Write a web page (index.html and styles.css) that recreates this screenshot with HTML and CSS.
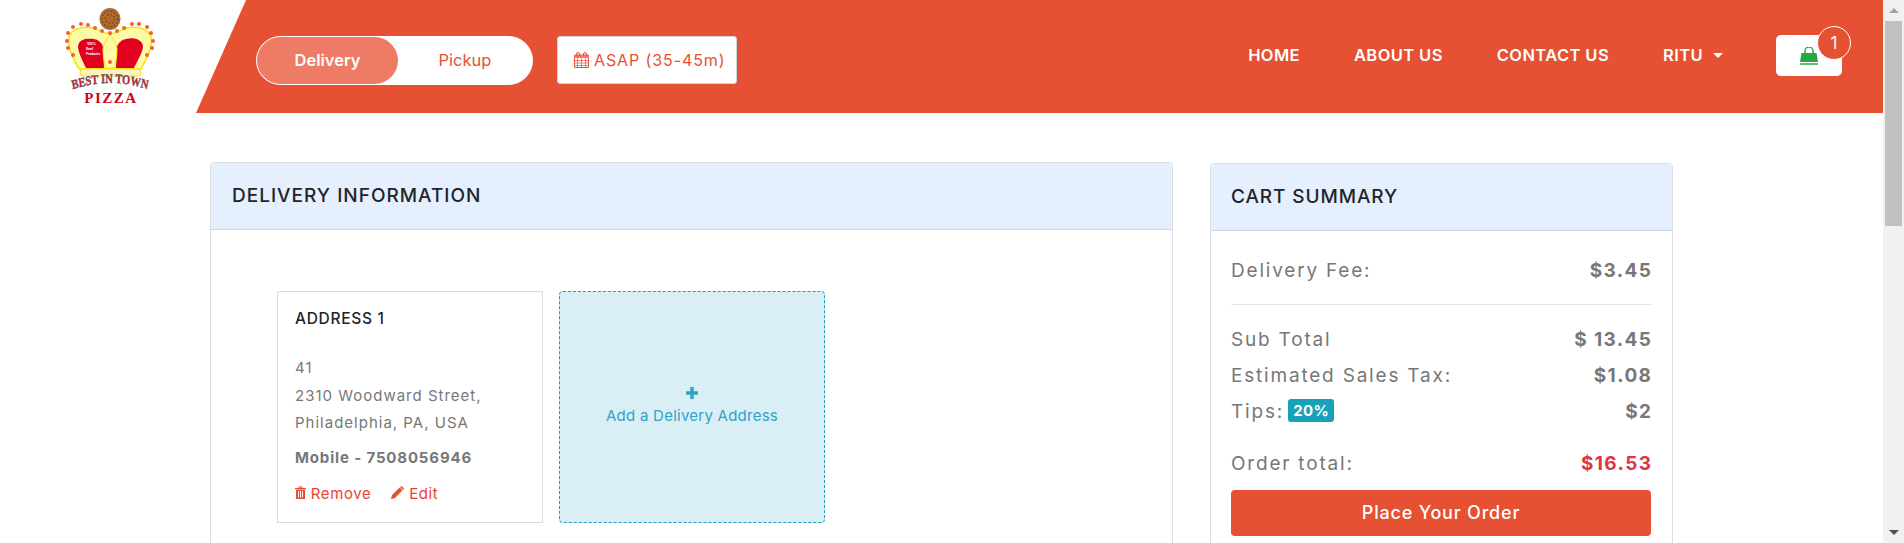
FILE: index.html
```html
<!DOCTYPE html>
<html lang="en">
<head>
    <meta charset="UTF-8">
    <meta name="viewport" content="width=device-width, initial-scale=1.0">
    <title>Best In Town Pizza - Checkout</title>
    <link rel="stylesheet" href="styles.css">
</head>
<body>
    <div class="page">
        <header class="header">
            <a class="logo" href="#">
                <svg class="logo-svg" viewBox="0 0 130 115" width="130" height="115">
                    <ellipse cx="60" cy="19" rx="10.500" ry="11" fill="#b0692f"/>
                    <circle cx="60" cy="19" r="8" fill="none" stroke="#7a4319" stroke-width="1.500" stroke-dasharray="1.500 2"/>
                    <circle cx="60" cy="19" r="4.500" fill="none" stroke="#7a4319" stroke-width="1.500" stroke-dasharray="1.500 2"/>
                    <path d="M29 69 C23 58 17 47 19 37 C21 29 33 26 43 28 C50 30 55 34 60 34 C65 34 70 30 77 28 C87 26 99 29 101 37 C103 47 97 58 91 69 Z" fill="#fffaa8" stroke="#f5e50a" stroke-width="1.500"/>
                    <path d="M36 68 C31 58 28 51 28 46 C29 39 37 38 44 39 C49 40 52 43 53 47 L54 68 Z" fill="#e2001f"/>
                    <path d="M84 68 C89 58 93 51 93 46 C92 39 83 37 76 39 C71 40 68 43 67 47 L66 68 Z" fill="#e2001f"/>
                    <path d="M60 35 C63 38 67 44 67 50 C67 58 65 63 65 68 L55 68 C55 63 53 58 53 50 C53 44 57 38 60 35 Z" fill="#fffaa8" stroke="#f5e50a"/>
                    <rect x="30" y="69" width="61" height="7" rx="3.500" fill="#fdf3c0" stroke="#f5e50a"/>
                    <g fill="#f0603a">
                        <circle cx="23" cy="27" r="2"/><circle cx="31" cy="24" r="2"/><circle cx="38" cy="25" r="2"/><circle cx="45" cy="28" r="2"/><circle cx="52" cy="31" r="2"/>
                        <circle cx="60" cy="33" r="2"/><circle cx="67" cy="31" r="2"/><circle cx="74" cy="28" r="2"/><circle cx="82" cy="24" r="2"/><circle cx="89" cy="24" r="2"/><circle cx="97" cy="27" r="2"/>
                        <circle cx="101" cy="33" r="2"/><circle cx="103" cy="41" r="2"/><circle cx="102" cy="48" r="2"/><circle cx="97" cy="55" r="2"/>
                        <circle cx="18" cy="33" r="2"/><circle cx="17" cy="41" r="2"/><circle cx="18" cy="48" r="2"/><circle cx="23" cy="55" r="2"/>
                        <circle cx="60" cy="62" r="2"/>
                    </g>
                    <text class="logo-small" x="37" y="45">100%</text>
                    <text class="logo-small" x="36" y="50">Beef</text>
                    <text class="logo-small" x="36" y="55">Products</text>
                    <g transform="translate(60 0) scale(.8 1) translate(-60 0)">
                        <path id="logo-arc" d="M4 92 Q60 74 116 92" fill="none"/>
                        <text class="logo-best"><textPath href="#logo-arc" startOffset="50%" text-anchor="middle">BEST IN TOWN</textPath></text>
                    </g>
                    <text class="logo-pizza" x="61" y="103" text-anchor="middle">PIZZA</text>
                </svg>
            </a>
            <div class="header-band">
                <div class="mode-toggle">
                    <span class="mode mode-active">Delivery</span>
                    <span class="mode">Pickup</span>
                </div>
                <button class="asap-button">
                    <svg class="icon-calendar" viewBox="0 0 15 16" width="15" height="16">
                        <path d="M.5 3h14v12.500H.5z" fill="none" stroke="#e65133"/>
                        <path d="M0 3h15v3H0z" fill="#ee7b65"/>
                        <path d="M2.500 4V2a1.500 1.500 0 0 1 3 0v2M9.500 4V2a1.500 1.500 0 0 1 3 0v2" fill="none" stroke="#e65133"/>
                        <path d="M0 8.500h15M0 11h15M0 13.500h15M3.500 6v9M7.500 6v9M11.500 6v9" stroke="#e65133" stroke-width=".7"/>
                    </svg>
                    ASAP (35-45m)
                </button>
                <nav class="nav">
                    <a href="#">HOME</a>
                    <a href="#">ABOUT US</a>
                    <a href="#">CONTACT US</a>
                    <a href="#">RITU<span class="caret"></span></a>
                </nav>
                <div class="cart-button">
                    <svg class="icon-bag" viewBox="0 0 18 18" width="18" height="18">
                        <path d="M5 7V4a4 4 0 0 1 8 0v3" fill="none" stroke="#28a745" stroke-width="1.400"/>
                        <path d="M1.500 6h15L18 15H0z" fill="#28a745"/>
                        <path d="M0 17h18" stroke="#28a745" stroke-width="1.500"/>
                    </svg>
                    <span class="cart-count">1</span>
                </div>
            </div>
        </header>

        <main class="content">
            <section class="card delivery-card">
                <h2 class="card-header">DELIVERY INFORMATION</h2>
                <div class="address-list">
                    <div class="address">
                        <h3 class="address-title">ADDRESS 1</h3>
                        <p class="address-lines">41<br>2310 Woodward Street,<br>Philadelphia, PA, USA</p>
                        <p class="address-mobile">Mobile - 7508056946</p>
                        <div class="address-actions">
                            <a href="#">
                                <svg viewBox="0 0 11 13" width="11" height="13"><path d="M0 2h11v1.300H0zM3.500 2V.6h4V2H6.500V1.500h-2V2zM1 3.800h9V13H1zM3 5v6.500h.9V5zM5 5v6.500h1V5zM7.100 5v6.500H8V5z" fill="#e65133" fill-rule="evenodd"/></svg>
                                Remove
                            </a>
                            <a href="#">
                                <svg viewBox="0 0 12 12" width="13" height="13"><path d="M0 12l.8-3.500L8 1.300l2.700 2.700-7.200 7.200zM8.800.5q.8-.7 1.500 0l1.200 1.200q.7.7 0 1.500l-.4.400L8.400.9z" fill="#e65133"/></svg>
                                Edit
                            </a>
                        </div>
                    </div>
                    <a class="address-add" href="#">
                        <svg viewBox="0 0 12 12" width="12" height="12"><path d="M4.300 0h3.400v4.300H12v3.400H7.700V12H4.300V7.700H0V4.300h4.300z" fill="#32a2c7"/></svg>
                        <span>Add a Delivery Address</span>
                    </a>
                </div>
            </section>

            <aside class="card cart-card">
                <h2 class="card-header">CART SUMMARY</h2>
                <div class="cart-body">
                    <div class="cart-row cart-row-fee"><span>Delivery Fee:</span><b>$3.45</b></div>
                    <hr class="cart-rule">
                    <div class="cart-row"><span>Sub Total</span><b>$ 13.45</b></div>
                    <div class="cart-row"><span>Estimated Sales Tax:</span><b>$1.08</b></div>
                    <div class="cart-row"><span>Tips: <em class="tip-badge">20%</em></span><b>$2</b></div>
                    <div class="cart-row cart-row-total"><span>Order total:</span><b class="total">$16.53</b></div>
                    <button class="order-button">Place Your Order</button>
                </div>
            </aside>
        </main>
    </div>

    <div class="scrollbar">
        <span class="arrow-up"></span>
        <div class="scroll-track"><div class="scroll-thumb"></div></div>
        <span class="arrow-down"></span>
    </div>
</body>
</html>
```
FILE: styles.css
```css
* {
    box-sizing: border-box;
}

html,
body {
    height: 543px;
    overflow: hidden;
}

body {
    display: flex;
    margin: 0;
    background: #fff;
    color: #777;
    font-family: 'Inter', 'Liberation Sans', sans-serif;
}

.page {
    flex: 1;
    min-width: 0;
}

/* header */
.header {
    display: flex;
    height: 113px;
}

.logo {
    display: block;
    flex: none;
    width: 196px;
    padding-left: 50px;
}

.logo-svg {
    display: block;
}

.logo-small {
    fill: #fff;
    font-size: 3.200px;
    font-weight: 700;
}

.logo-best {
    fill: #d8263c;
    stroke: #444;
    stroke-width: .4px;
    font-family: 'Liberation Serif', serif;
    font-size: 13px;
    font-weight: 700;
}

.logo-pizza {
    fill: #d0021b;
    font-family: 'Liberation Serif', serif;
    font-size: 15px;
    font-weight: 700;
    letter-spacing: 1.500px;
}

.header-band {
    flex: 1;
    display: flex;
    align-items: flex-start;
    padding-left: 60px;
    background: #e65133;
    clip-path: polygon(50px 0, 100% 0, 100% 100%, 0 100%);
}

.mode-toggle {
    display: flex;
    width: 277px;
    height: 49px;
    margin-top: 36px;
    border: 1px solid #fff;
    border-radius: 25px;
    background: #fff;
    font-size: 16.500px;
    line-height: 47px;
    text-align: center;
}

.mode {
    flex: 1;
    color: #e65133;
}

.mode-active {
    flex: none;
    width: 141px;
    border-radius: 25px;
    background: #ee7b65;
    color: #fff;
    font-weight: 600;
}

.asap-button {
    display: flex;
    align-items: center;
    gap: 5px;
    width: 180px;
    height: 48px;
    margin: 36px 0 0 24px;
    padding: 0 0 0 16px;
    border: 1px solid #ccd5e5;
    border-radius: 3px;
    background: #fff;
    color: #e65133;
    font-family: inherit;
    font-size: 16px;
    letter-spacing: .9px;
    white-space: nowrap;
}

.nav {
    display: flex;
    gap: 54px;
    margin: 45px 0 0 auto;
}

.nav a {
    color: #fff;
    font-size: 16.500px;
    font-weight: 600;
    letter-spacing: .4px;
    line-height: 20px;
    text-decoration: none;
}

.caret {
    display: inline-block;
    margin-left: 10px;
    vertical-align: 3px;
    border-top: 5px solid #fff;
    border-right: 5px solid transparent;
    border-left: 5px solid transparent;
}

.cart-button {
    position: relative;
    display: flex;
    align-items: center;
    justify-content: center;
    width: 66px;
    height: 41px;
    margin: 35px 41px 0 53px;
    border-radius: 5px;
    background: #fff;
}

.cart-count {
    position: absolute;
    top: -9px;
    right: -9px;
    width: 34px;
    height: 34px;
    border: 1px solid #fff;
    border-radius: 50%;
    background: #e65133;
    color: #fff;
    font-size: 17px;
    line-height: 32px;
    text-align: center;
}

/* content */
.content {
    display: flex;
    align-items: flex-start;
    gap: 37px;
    padding: 49px 0 0 210px;
}

.card {
    flex: none;
    height: 500px;
    border: 1px solid #d9dee6;
    border-radius: 4px;
    overflow: hidden;
}

.delivery-card {
    width: 963px;
}

.cart-card {
    width: 463px;
    margin-top: 1px;
}

.card-header {
    height: 67px;
    margin: 0;
    padding: 0 21px;
    border-bottom: 1px solid #ccd5e5;
    background: #e5effd;
    color: #212529;
    font-size: 19px;
    font-weight: 500;
    letter-spacing: 1px;
    line-height: 65px;
}

.cart-card .card-header {
    padding: 0 20px;
    letter-spacing: .9px;
}

.address-list {
    display: flex;
    gap: 16px;
    padding: 61px 0 0 66px;
}

.address {
    width: 266px;
    height: 232px;
    padding: 16px 17px;
    border: 1px solid #dcdcdc;
}

.address-title {
    margin: 0 0 24px;
    color: #212529;
    font-size: 15.500px;
    font-weight: 500;
    letter-spacing: .7px;
    line-height: 22px;
}

.address-lines {
    margin: 0 0 10px;
    font-size: 15px;
    letter-spacing: 1px;
    line-height: 27.500px;
}

.address-mobile {
    margin: 0 0 14px;
    font-size: 15px;
    font-weight: 700;
    letter-spacing: .85px;
    line-height: 22px;
}

.address-actions {
    display: flex;
    gap: 20px;
}

.address-actions a {
    color: #ea4335;
    font-size: 15px;
    letter-spacing: .6px;
    line-height: 22px;
    text-decoration: none;
}

.address-add {
    display: flex;
    flex-direction: column;
    align-items: center;
    justify-content: center;
    gap: 7px;
    width: 266px;
    height: 232px;
    padding-bottom: 3px;
    border: 1px dashed #17a2b8;
    border-radius: 4px;
    background: #daeef5;
    color: #32a2c7;
    font-size: 15px;
    letter-spacing: .25px;
    text-decoration: none;
}

.cart-body {
    padding: 21px 21px 0 20px;
}

.cart-row {
    display: flex;
    justify-content: space-between;
    align-items: center;
    height: 36px;
    font-size: 19px;
    letter-spacing: 1.800px;
}

.cart-row b {
    margin-right: -1.400px;
    font-weight: 700;
    letter-spacing: 1.400px;
}

.cart-row-fee {
    margin-bottom: 16px;
}

.cart-rule {
    margin: 0 0 16px;
    border: 0;
    border-top: 1px solid #e3e3e3;
}

.cart-row-total {
    margin-top: 16px;
}

.tip-badge {
    display: inline-block;
    margin-left: -3px;
    padding: 3px 5px;
    border-radius: 3px;
    background: #17a2b8;
    color: #fff;
    font-size: 15px;
    font-style: normal;
    font-weight: 700;
    letter-spacing: .4px;
    line-height: 17px;
    vertical-align: 2px;
}

.total {
    color: #dc3545;
}

.order-button {
    display: block;
    width: 100%;
    height: 46px;
    margin-top: 9px;
    padding: 0 0 2px;
    border: 0;
    border-radius: 4px;
    background: #e65133;
    color: #fff;
    font-family: inherit;
    font-size: 18px;
    font-weight: 500;
    letter-spacing: .8px;
}

/* page scrollbar */
.scrollbar {
    flex: none;
    display: flex;
    flex-direction: column;
    align-items: center;
    width: 21px;
    height: 543px;
    background: #f1f1f1;
}

.arrow-up,
.arrow-down {
    flex: none;
    width: 0;
    margin: 8px 0;
    border-right: 5px solid transparent;
    border-left: 5px solid transparent;
}

.arrow-up {
    border-bottom: 5px solid #a3a3a3;
}

.arrow-down {
    border-top: 5px solid #505050;
}

.scroll-track {
    flex: 1;
    width: 100%;
    padding: 0 2px;
}

.scroll-thumb {
    height: 205px;
    background: #c1c1c1;
}
```
